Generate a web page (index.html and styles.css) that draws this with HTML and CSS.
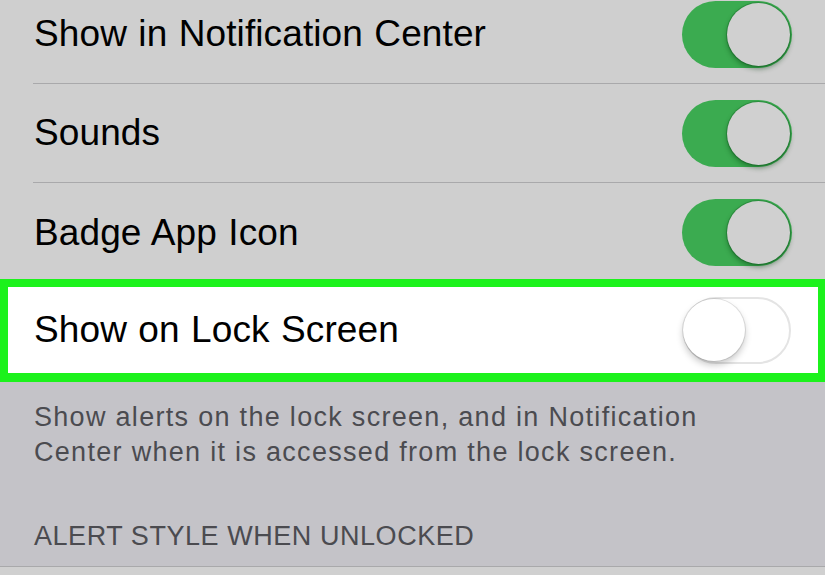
FILE: index.html
```html
<!DOCTYPE html>
<html>
<head>
<meta charset="utf-8">
<link rel="stylesheet" href="styles.css">
</head>
<body>
<div class="list">
  <div class="row">
    <div class="row-inner">
      <span class="label">Show in Notification Center</span>
      <span class="toggle on"><span class="knob"></span></span>
    </div>
  </div>
  <div class="row">
    <div class="row-inner">
      <span class="label">Sounds</span>
      <span class="toggle on"><span class="knob"></span></span>
    </div>
  </div>
  <div class="row row-last">
    <div class="row-inner">
      <span class="label">Badge App Icon</span>
      <span class="toggle on"><span class="knob"></span></span>
    </div>
  </div>
  <div class="row-highlight">
    <span class="label">Show on Lock Screen</span>
    <span class="toggle off"><span class="knob"></span></span>
  </div>
</div>
<p class="footer">Show alerts on the lock screen, and in Notification Center when it is accessed from the lock screen.</p>
<h2 class="section-header">ALERT STYLE WHEN UNLOCKED</h2>
<div class="next-group"></div>
</body>
</html>
```

FILE: styles.css
```css
html, body {
  margin: 0;
  padding: 0;
}
body {
  width: 825px;
  height: 575px;
  overflow: hidden;
  background: #c4c3c8;
  font-family: "Liberation Sans", Arial, sans-serif;
}
.list {
  margin-top: -15px;
  background: #cfcfcf;
}
.row {
  height: 99px;
  padding-left: 33px;
  display: flex;
  box-sizing: border-box;
}
.row-inner {
  flex: 1;
  display: flex;
  align-items: center;
  justify-content: space-between;
  padding-right: 33px;
  border-bottom: 1px solid #a9a9ab;
}
.row-last {
  height: 96px;
}
.row-last .row-inner {
  border-bottom: none;
  padding-top: 3px;
}
.label {
  font-size: 37px;
  color: #000;
  word-spacing: 1px;
  letter-spacing: 0.1px;
  padding-left: 1px;
}
.row-highlight {
  height: 103px;
  box-sizing: border-box;
  border: 8px solid #1cf21c;
  border-right-width: 7px;
  border-bottom-width: 9px;
  background: #fff;
  display: flex;
  align-items: center;
  justify-content: space-between;
  padding-left: 25px;
  padding-right: 27px;
}
.toggle {
  width: 110px;
  height: 67px;
  border-radius: 34px;
  box-sizing: border-box;
  display: flex;
  align-items: center;
  padding: 2px;
}
.toggle.on {
  background: #3bab50;
  justify-content: flex-end;
}
.toggle.on .knob {
  background: #d0d0d0;
  box-shadow: 0 3px 5px rgba(0, 60, 10, 0.45), 0 0 0 1px rgba(0, 70, 20, 0.25);
}
.toggle.off {
  width: 108px;
  background: #fff;
  border: 2px solid #e4e4e4;
  justify-content: flex-start;
  padding: 0;
}
.toggle.off .knob {
  width: 62px;
  height: 62px;
  margin-left: -2px;
  background: #fff;
  box-shadow: 0 4px 7px rgba(0, 0, 0, 0.22), 0 0 0 1px rgba(0, 0, 0, 0.1);
}
.knob {
  width: 63px;
  height: 63px;
  border-radius: 50%;
  display: block;
}
.footer {
  margin: 0;
  padding: 18px 33px 0 34px;
  font-size: 27px;
  line-height: 35px;
  letter-spacing: 1.3px;
  color: #4b4b50;
  width: 720px;
}
.section-header {
  margin: 0;
  padding: 50px 33px 14px 34px;
  font-size: 27px;
  font-weight: normal;
  line-height: 32px;
  color: #4b4b50;
  border-bottom: 1px solid #a9a9ab;
  letter-spacing: 0.55px;
}
.next-group {
  height: 40px;
  background: #d0d0d0;
}
```
